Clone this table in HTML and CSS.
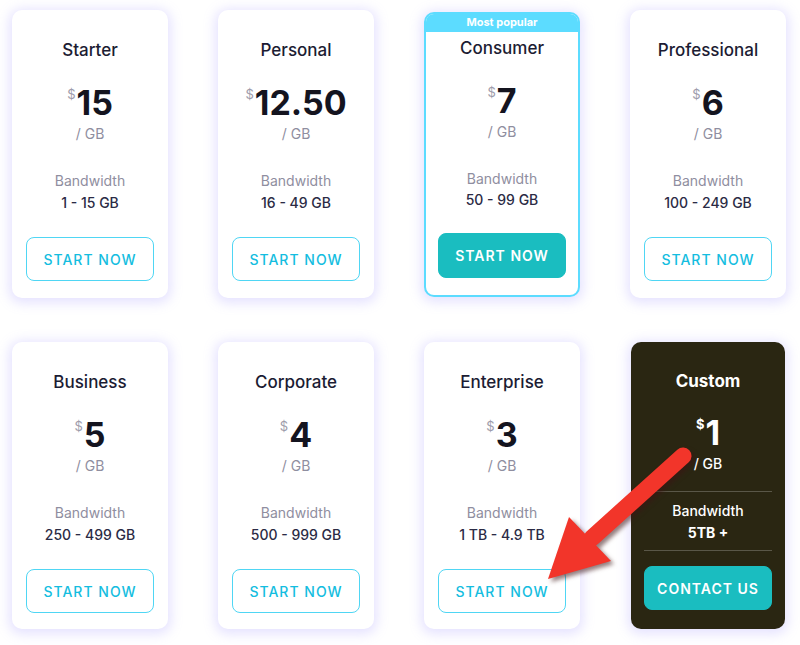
FILE: index.html
```html
<!DOCTYPE html>
<html lang="en">
<head>
<meta charset="utf-8">
<title>Pricing</title>
<link rel="stylesheet" href="styles.css">
</head>
<body>
<main class="plans">
  <section class="card">
    <h3 class="name">Starter</h3>
    <div class="price"><span class="cur">$</span>15</div>
    <div class="unit">/ GB</div>
    <div class="stats"><div class="label">Bandwidth</div><div class="range">1 - 15 GB</div></div>
    <a class="btn">START NOW</a>
  </section>
  <section class="card">
    <h3 class="name">Personal</h3>
    <div class="price"><span class="cur">$</span>12.50</div>
    <div class="unit">/ GB</div>
    <div class="stats"><div class="label">Bandwidth</div><div class="range">16 - 49 GB</div></div>
    <a class="btn">START NOW</a>
  </section>
  <section class="card popular">
    <div class="badge">Most popular</div>
    <h3 class="name">Consumer</h3>
    <div class="price"><span class="cur">$</span>7</div>
    <div class="unit">/ GB</div>
    <div class="stats"><div class="label">Bandwidth</div><div class="range">50 - 99 GB</div></div>
    <a class="btn btn-fill">START NOW</a>
  </section>
  <section class="card">
    <h3 class="name">Professional</h3>
    <div class="price"><span class="cur">$</span>6</div>
    <div class="unit">/ GB</div>
    <div class="stats"><div class="label">Bandwidth</div><div class="range">100 - 249 GB</div></div>
    <a class="btn">START NOW</a>
  </section>
  <section class="card">
    <h3 class="name">Business</h3>
    <div class="price"><span class="cur">$</span>5</div>
    <div class="unit">/ GB</div>
    <div class="stats"><div class="label">Bandwidth</div><div class="range">250 - 499 GB</div></div>
    <a class="btn">START NOW</a>
  </section>
  <section class="card">
    <h3 class="name">Corporate</h3>
    <div class="price"><span class="cur">$</span>4</div>
    <div class="unit">/ GB</div>
    <div class="stats"><div class="label">Bandwidth</div><div class="range">500 - 999 GB</div></div>
    <a class="btn">START NOW</a>
  </section>
  <section class="card">
    <h3 class="name">Enterprise</h3>
    <div class="price"><span class="cur">$</span>3</div>
    <div class="unit">/ GB</div>
    <div class="stats"><div class="label">Bandwidth</div><div class="range">1 TB - 4.9 TB</div></div>
    <a class="btn">START NOW</a>
  </section>
  <section class="card custom">
    <h3 class="name">Custom</h3>
    <div class="price"><span class="cur">$</span>1</div>
    <div class="unit">/ GB</div>
    <div class="stats"><div class="label">Bandwidth</div><div class="range">5TB +</div></div>
    <a class="btn btn-fill">CONTACT US</a>
  </section>
</main>
<svg class="arrow" width="800" height="645" viewBox="0 0 800 645" aria-hidden="true">
  <g class="arrow-shape">
    <line x1="683" y1="456" x2="592" y2="538" stroke="#f2352a" stroke-width="17" stroke-linecap="round"/>
    <polygon points="569,517 611,561 548,579" fill="#f2352a"/>
  </g>
</svg>
</body>
</html>
```

FILE: styles.css
```css
* { box-sizing: border-box; }
html, body { margin: 0; padding: 0; }
body {
  background: #ffffff;
  font-family: Inter, "Noto Sans", sans-serif;
  width: 800px;
  height: 645px;
  overflow: hidden;
  position: relative;
}
.plans {
  display: grid;
  grid-template-columns: repeat(4, 156px);
  grid-template-rows: 288px 287px;
  column-gap: 50px;
  row-gap: 44px;
  padding: 10px 0 0 12px;
}
.card {
  background: #ffffff;
  border-radius: 10px;
  box-shadow: 0 2px 12px 3px rgba(160, 150, 255, 0.28);
  display: flex;
  flex-direction: column;
  align-items: center;
  padding: 29px 14px 0;
  text-align: center;
}
.name {
  margin: 0;
  font-size: 17px;
  line-height: 22px;
  font-weight: 500;
  color: #1c1c33;
}
.price {
  margin-top: 22px;
  font-size: 34px;
  line-height: 40px;
  font-weight: 700;
  color: #14141f;
  display: flex;
  align-items: flex-start;
}
.cur {
  font-size: 13px;
  line-height: 16px;
  font-weight: 400;
  color: #9d9cab;
  margin-top: 3px;
  margin-right: 1px;
}
.unit {
  margin-top: 2px;
  font-size: 14px;
  line-height: 18px;
  color: #8f8ea0;
}
.stats {
  align-self: stretch;
  margin-top: 18px;
  padding: 10px 0 8px;
  border-top: 1px solid transparent;
  border-bottom: 1px solid transparent;
}
.label {
  font-size: 14px;
  line-height: 18px;
  color: #8f8ea0;
}
.range {
  margin-top: 4px;
  font-size: 14px;
  line-height: 18px;
  font-weight: 500;
  color: #2b2b45;
}
.btn {
  margin-top: 16px;
  align-self: stretch;
  height: 44px;
  border: 1px solid #4fd6f4;
  border-radius: 8px;
  display: flex;
  align-items: center;
  justify-content: center;
  font-size: 14px;
  font-weight: 500;
  letter-spacing: 1px;
  color: #14bde0;
}
.btn-fill {
  background: #1abdc0;
  border-color: #1abdc0;
  color: #ffffff;
  font-weight: 600;
}

.popular {
  margin-top: 2px;
  height: 285px;
  align-self: start;
  border: 2px solid #5cdcff;
  padding: 0 12px;
  overflow: hidden;
}
.badge {
  align-self: stretch;
  margin: 0 -12px;
  height: 18px;
  background: #5cdcff;
  color: #ffffff;
  font-size: 11px;
  line-height: 16px;
  font-weight: 700;
}
.popular .name { margin-top: 5px; }
.popular .stats { margin-top: 18px; }
.popular .range { margin-top: 3px; }
.popular .btn { height: 45px; margin-top: 15px; }

.custom {
  background: #2a2612;
  padding-top: 28px;
  margin-left: 1px;
  margin-right: 1px;
  padding-left: 13px;
  padding-right: 13px;
}
.custom .name { font-weight: 700; color: #ffffff; }
.custom .price { color: #ffffff; margin-top: 21px; }
.custom .cur { color: #ffffff; font-weight: 700; }
.custom .unit { color: #ffffff; font-weight: 500; }
.custom .stats {
  border-top-color: #5a5748;
  border-bottom-color: #5a5748;
  margin-top: 18px;
}
.custom .label { color: #ffffff; font-weight: 500; }
.custom .range { color: #ffffff; font-weight: 700; }
.custom .btn { margin-top: 15px; }

.arrow {
  position: absolute;
  left: 0;
  top: 0;
  pointer-events: none;
}
.arrow-shape {
  filter: drop-shadow(3px 3px 2px rgba(60, 20, 20, 0.55));
}
```
